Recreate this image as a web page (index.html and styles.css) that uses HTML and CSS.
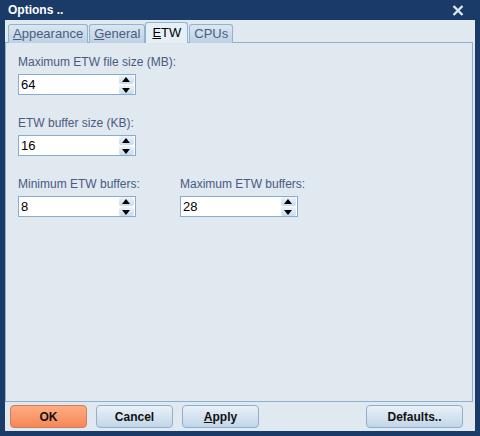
FILE: index.html
```html
<!DOCTYPE html>
<html lang="en">
<head>
<meta charset="UTF-8">
<title>Options</title>
<link rel="stylesheet" href="styles.css">
</head>
<body>

<div class="window">
    <div class="titlebar">
        <span class="title">Options ..</span>
        <svg class="close" width="12" height="11" viewBox="0 0 12 11">
            <path d="M1.5 1 L10.5 10 M10.5 1 L1.5 10" stroke="#dce8f4" stroke-width="2.4" fill="none"/>
        </svg>
    </div>

    <div class="client">
        <div class="tabs">
            <div class="tab"><u>A</u>ppearance</div>
            <div class="tab"><u>G</u>eneral</div>
            <div class="tab active"><u>E</u>TW</div>
            <div class="tab">CPUs</div>
        </div>

        <div class="panel">
            <div class="field">
                <label>Maximum ETW file size (MB):</label>
                <div class="spinner"><span>64</span><div class="arrows"><b class="up"></b><b class="down"></b></div></div>
            </div>
            <div class="field">
                <label>ETW buffer size (KB):</label>
                <div class="spinner"><span>16</span><div class="arrows"><b class="up"></b><b class="down"></b></div></div>
            </div>
            <div class="row">
                <div class="field">
                    <label>Minimum ETW buffers:</label>
                    <div class="spinner"><span>8</span><div class="arrows"><b class="up"></b><b class="down"></b></div></div>
                </div>
                <div class="field">
                    <label>Maximum ETW buffers:</label>
                    <div class="spinner"><span>28</span><div class="arrows"><b class="up"></b><b class="down"></b></div></div>
                </div>
            </div>
        </div>

        <div class="buttons">
            <button class="btn ok">OK</button>
            <button class="btn">Cancel</button>
            <button class="btn"><u>A</u>pply</button>
            <button class="btn defaults">Defaults..</button>
        </div>
    </div>
</div>

</body>
</html>
```

FILE: styles.css
```css
* {
    box-sizing: border-box;
    margin: 0;
    padding: 0;
}
body {
    font-family: "Liberation Sans", Arial, sans-serif;
    font-size: 12px;
    background: #1a3a68;
}
.window {
    width: 480px;
    height: 436px;
    background-color: #1a3a68;
    display: flex;
    flex-direction: column;
}
.titlebar {
    height: 20px;
    display: flex;
    justify-content: space-between;
    align-items: center;
    padding: 0 16px 0 8px;
}
.title {
    color: white;
    font-weight: bold;
    font-size: 12px;
}
.client {
    flex: 1;
    margin: 0 5px 5px 5px;
    background-color: #e0e8f0;
    display: flex;
    flex-direction: column;
}

/* tabs */
.tabs {
    height: 22px;
    display: flex;
    align-items: flex-end;
    padding: 0 0 0 3px;
}
.tab {
    height: 19px;
    padding: 1px 4px 0 4px;
    margin-right: 1px;
    border: 1px solid #93b2ce;
    border-bottom: none;
    border-radius: 3px 3px 0 0;
    background: linear-gradient(#dbe7f2, #bcd1e4);
    color: #4a5c80;
    font-size: 13px;
    position: relative;
    top: 1px;
}
.tab.active {
    height: 21px;
    padding: 2px 6px 0 6px;
    margin-left: -1px;
    background: #e6eef6;
    color: #000;
    z-index: 1;
}
.panel {
    flex: 1;
    margin-right: 2px;
    border: 1px solid #8fb0cc;
    padding: 12px 12px;
}

/* fields */
.field {
    width: 118px;
    margin-bottom: 21px;
}
.field label {
    display: block;
    color: #4a5a82;
    white-space: nowrap;
    margin-bottom: 5px;
    line-height: 14px;
}
.row {
    display: flex;
    gap: 44px;
    margin-top: 1px;
}
.spinner {
    height: 21px;
    background: white;
    border: 1px solid #88acd0;
    display: flex;
    justify-content: space-between;
    align-items: center;
    padding-left: 2px;
    font-size: 13px;
}
.arrows {
    width: 15px;
    height: 19px;
    display: flex;
    flex-direction: column;
    gap: 1px;
    margin-right: 1px;
}
.arrows b {
    flex: 1;
    border-radius: 2px;
    background: linear-gradient(#eef4fa, #c9dbea);
    position: relative;
}
.arrows b::after {
    content: "";
    position: absolute;
    left: 3px;
    top: 2px;
    border-left: 4px solid transparent;
    border-right: 4px solid transparent;
}
.arrows .up::after {
    border-bottom: 5px solid #000;
}
.arrows .down::after {
    border-top: 5px solid #000;
    top: 3px;
}

/* bottom buttons */
.buttons {
    height: 29px;
    display: flex;
    align-items: center;
    padding: 0 12px 0 5px;
}
.btn {
    width: 77px;
    height: 23px;
    margin-right: 9px;
    border: 1px solid #8fb0cc;
    border-radius: 4px;
    background: linear-gradient(#e9f1f8, #c2d6e8);
    font-family: "Liberation Sans", Arial, sans-serif;
    font-size: 12px;
    font-weight: bold;
    color: #111;
}
.btn.ok {
    background: linear-gradient(#ffac84, #f58857);
    border-color: #d47a55;
}
.btn.defaults {
    width: 97px;
    margin-left: auto;
    margin-right: 0;
}
```
